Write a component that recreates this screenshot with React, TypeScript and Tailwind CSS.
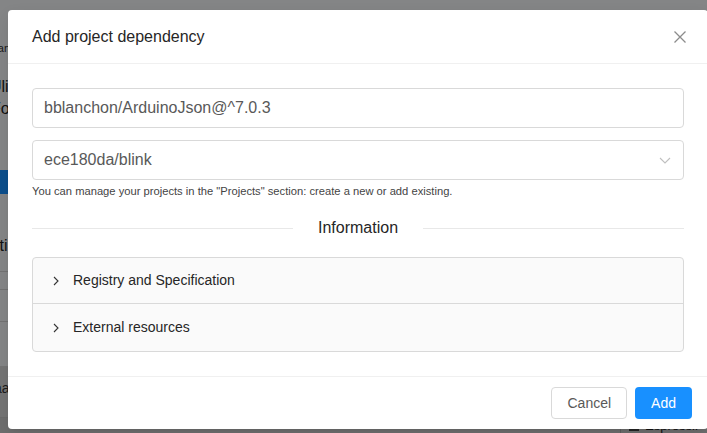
import React from "react";

function Chevron() {
  return (
    <svg width="12" height="12" viewBox="0 0 12 12" className="shrink-0">
      <path d="M4 2 L8 6 L4 10" fill="none" stroke="#333" strokeWidth="1.1" />
    </svg>
  );
}

export default function App() {
  return (
    <div className="relative w-[707px] h-[433px] overflow-hidden bg-[#f0f2f5] font-['Liberation_Sans',Arial,sans-serif]">
      {/* background page */}
      <div className="flex flex-col w-full h-full">
        <div className="h-[40px]" />
        <div className="h-[16px] -ml-[12px] text-[11px] leading-[16px] text-[#333]">Plan</div>
        <div className="h-[20px]" />
        <div className="h-[22px] -ml-[10px] text-[16px] leading-[22px] text-[#222]">Uli</div>
        <div className="h-[22px] -ml-[9px] text-[16px] leading-[22px] text-[#222]">Fo</div>
        <div className="h-[50px]" />
        <div className="h-[24px] w-[40px] bg-[#1890ff] flex items-center justify-end pr-[26px] text-white text-[12px]">⤓</div>
        <div className="h-[42px]" />
        <div className="h-[20px] -ml-[12px] text-[16px] leading-[20px] text-[#222]">Nti</div>
        <div className="h-[16px] border-b border-[#d0d0d0]" />
        <div className="h-[18px] border-b border-[#d0d0d0]" />
        <div className="h-[32px] border-b border-[#d0d0d0]" />
        <div className="h-[44px]" />
        <div className="flex-1 bg-[#d4d4d4] flex flex-col">
          <div className="h-[14px]" />
          <div className="-ml-[6px] text-[14px] leading-[16px] text-[#333]">aa</div>
          <div className="flex-1" />
          <div className="flex h-[16px] items-center pl-[620px] border-t border-[#c4c4c4] bg-[#c8c8c8]">
            <div className="h-full border-l border-[#aaa] pl-[8px] flex items-center gap-[6px] text-[13px] text-[#222]">
              <span className="inline-block w-[10px] h-[10px] bg-[#444]" />
              Espressif
            </div>
          </div>
        </div>
      </div>

      {/* mask */}
      <div className="absolute inset-0 bg-black/45" />

      {/* modal */}
      <div className="absolute left-[8px] top-[10px] w-[700px] bg-white rounded-[4px] flex flex-col shadow-[0_3px_6px_-4px_rgba(0,0,0,0.12),0_6px_16px_0_rgba(0,0,0,0.08)]">
        <div className="flex items-center justify-between h-[54px] px-[24px] border-b border-[#f0f0f0]">
          <div className="text-[16px] leading-[22px] text-[#262626]">Add project dependency</div>
          <svg width="14" height="14" viewBox="0 0 14 14" className="mr-[-3px]">
            <path d="M1.5 1.5 L12.5 12.5 M12.5 1.5 L1.5 12.5" stroke="#8c8c8c" strokeWidth="1.3" fill="none" />
          </svg>
        </div>

        <div className="p-[24px] flex flex-col">
          <div className="h-[40px] border border-[#d9d9d9] rounded-[4px] flex items-center px-[11px] text-[16px] text-[#595959]">
            bblanchon/ArduinoJson@^7.0.3
          </div>
          <div className="h-[40px] mt-[12px] border border-[#d9d9d9] rounded-[4px] flex items-center justify-between px-[11px] text-[16px] text-[#595959]">
            <span>ece180da/blink</span>
            <svg width="12" height="12" viewBox="0 0 12 12" className="mr-[1px]">
              <path d="M1 4 L6 9 L11 4" fill="none" stroke="#bfbfbf" strokeWidth="1.1" />
            </svg>
          </div>
          <div className="mt-[3px] text-[11.2px] leading-[16px] text-[#444]">
            You can manage your projects in the "Projects" section: create a new or add existing.
          </div>

          <div className="mt-[18px] flex items-center gap-[25px]">
            <div className="flex-1 h-px bg-[#e8e8e8]" />
            <div className="text-[16px] leading-[22px] text-[#262626]">Information</div>
            <div className="flex-1 h-px bg-[#e8e8e8]" />
          </div>

          <div className="mt-[18px] border border-[#d9d9d9] rounded-[4px] bg-[#fafafa] flex flex-col">
            <div className="h-[46px] flex items-center gap-[11px] pl-[17px] text-[14px] text-[#262626] border-b border-[#d9d9d9]">
              <Chevron />
              <span>Registry and Specification</span>
            </div>
            <div className="h-[47px] flex items-center gap-[11px] pl-[17px] text-[14px] text-[#262626]">
              <Chevron />
              <span>External resources</span>
            </div>
          </div>
        </div>

        <div className="border-t border-[#f0f0f0] flex justify-end items-center gap-[8px] px-[16px] pt-[10px] pb-[10px]">
          <button className="h-[32px] px-[15px] border border-[#d9d9d9] rounded-[4px] bg-white text-[14px] text-[#595959]">
            Cancel
          </button>
          <button className="h-[32px] px-[16px] rounded-[4px] bg-[#1890ff] text-[14px] text-white">
            Add
          </button>
        </div>
      </div>
    </div>
  );
}
